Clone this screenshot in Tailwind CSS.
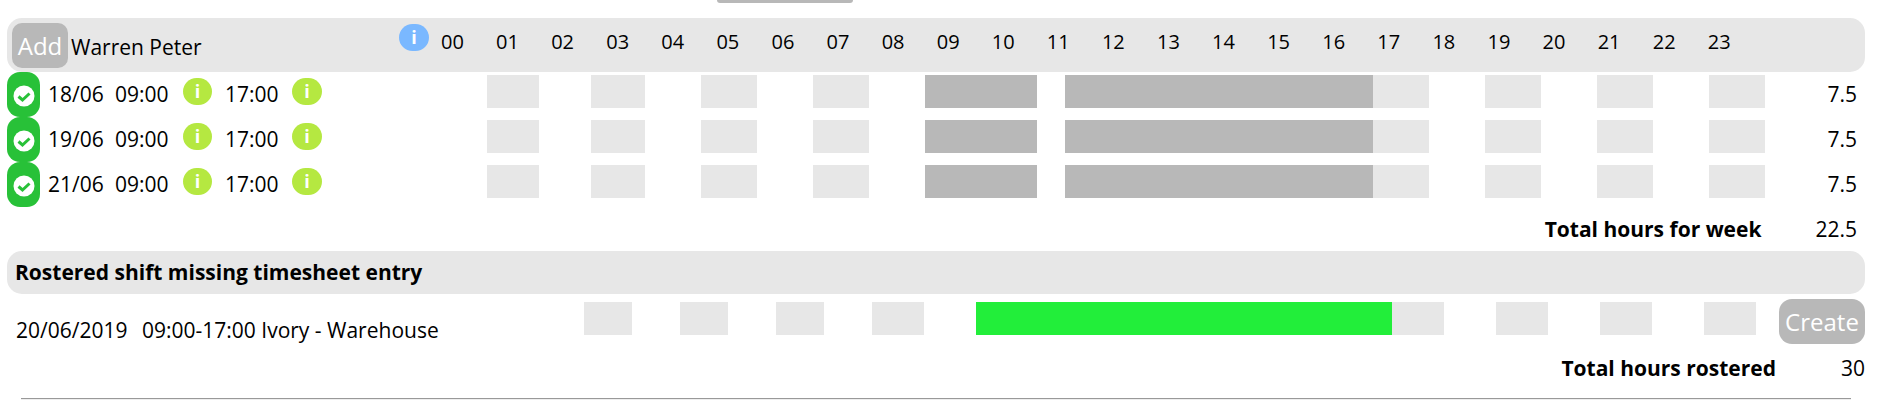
<!DOCTYPE html>
<html lang="en">
<head>
    <meta charset="UTF-8">
    <title>Timesheet</title>
    <script src="https://cdn.jsdelivr.net/npm/@tailwindcss/browser@4"></script>
</head>
<body class="bg-white text-black font-['Open_Sans',sans-serif] text-[21px] overflow-hidden">
<div class="w-[1885px] h-[407px]">
    <!-- button cut off by the top of the page -->
    <div class="ml-[717px] w-[136px] h-[3px] bg-[#b8b8b8] rounded-b-[10px]"></div>

    <!-- Employee header -->
    <div class="mt-[15px] ml-[7px] w-[1858px] h-[54px] bg-[#e7e7e7] rounded-[15px] flex">
        <div class="ml-[5px] mt-[5px] w-[56px] h-[45px] bg-[#b8b8b8] rounded-[10px] text-white text-[24px] leading-[45px] text-center">Add</div>
        <div class="ml-[3px] w-[328px] leading-[58px]">Warren Peter</div>
        <div class="mt-[6px] w-[30px] h-[27px] bg-[#7ab8ff] rounded-[14px] text-white font-bold text-[18px] leading-[26px] text-center">i</div>
        <div class="ml-[12px] flex text-[20px] leading-[48px]">
            <span class="w-[55.09px]">00</span><span class="w-[55.09px]">01</span><span class="w-[55.09px]">02</span><span class="w-[55.09px]">03</span><span class="w-[55.09px]">04</span><span class="w-[55.09px]">05</span><span class="w-[55.09px]">06</span><span class="w-[55.09px]">07</span><span class="w-[55.09px]">08</span><span class="w-[55.09px]">09</span><span class="w-[55.09px]">10</span><span class="w-[55.09px]">11</span><span class="w-[55.09px]">12</span><span class="w-[55.09px]">13</span><span class="w-[55.09px]">14</span><span class="w-[55.09px]">15</span><span class="w-[55.09px]">16</span><span class="w-[55.09px]">17</span><span class="w-[55.09px]">18</span><span class="w-[55.09px]">19</span><span class="w-[55.09px]">20</span><span class="w-[55.09px]">21</span><span class="w-[55.09px]">22</span><span class="w-[55.09px]">23</span>
        </div>
    </div>

    <!-- Timesheet rows -->
    <div class="flex h-[45px] pl-[7px]">
        <div class="w-[33px] h-[45px] bg-[#28c138] rounded-[13px] flex items-center justify-center">
            <svg class="mt-[3px]" width="22" height="22" viewBox="0 0 22 22"><circle cx="11" cy="11" r="10.5" fill="#fff"/><path d="M5.5 11.5l4 3.5 7-6.5" fill="none" stroke="#28c138" stroke-width="3"/></svg>
        </div>
        <div class="ml-[8px] w-[67px] leading-[45px]">18/06</div>
        <div class="w-[68px] leading-[45px]">09:00</div>
        <div class="mt-[6px] w-[29px] h-[27px] bg-[#b5e841] rounded-[14px] text-white font-bold text-[18px] leading-[26px] text-center">i</div>
        <div class="ml-[13px] w-[67px] leading-[45px]">17:00</div>
        <div class="mt-[6px] w-[30px] h-[27px] bg-[#b5e841] rounded-[14px] text-white font-bold text-[18px] leading-[26px] text-center">i</div>
        <div class="ml-[165px] mt-[3px] flex h-[33px]">
            <div class="w-[52px] bg-[#e7e7e7]"></div>
            <div class="ml-[52px] w-[54px] bg-[#e7e7e7]"></div>
            <div class="ml-[56px] w-[56px] bg-[#e7e7e7]"></div>
            <div class="ml-[56px] w-[56px] bg-[#e7e7e7]"></div>
            <div class="ml-[56px] w-[112px] bg-[#b8b8b8]"></div>
            <div class="ml-[28px] w-[308px] bg-[#b8b8b8]"></div>
            <div class="w-[56px] bg-[#e7e7e7]"></div>
            <div class="ml-[56px] w-[56px] bg-[#e7e7e7]"></div>
            <div class="ml-[56px] w-[56px] bg-[#e7e7e7]"></div>
            <div class="ml-[56px] w-[56px] bg-[#e7e7e7]"></div>
        </div>
        <div class="w-[92px] text-right leading-[45px]">7.5</div>
    </div>
    <div class="flex h-[45px] pl-[7px]">
        <div class="w-[33px] h-[45px] bg-[#28c138] rounded-[13px] flex items-center justify-center">
            <svg class="mt-[3px]" width="22" height="22" viewBox="0 0 22 22"><circle cx="11" cy="11" r="10.5" fill="#fff"/><path d="M5.5 11.5l4 3.5 7-6.5" fill="none" stroke="#28c138" stroke-width="3"/></svg>
        </div>
        <div class="ml-[8px] w-[67px] leading-[45px]">19/06</div>
        <div class="w-[68px] leading-[45px]">09:00</div>
        <div class="mt-[6px] w-[29px] h-[27px] bg-[#b5e841] rounded-[14px] text-white font-bold text-[18px] leading-[26px] text-center">i</div>
        <div class="ml-[13px] w-[67px] leading-[45px]">17:00</div>
        <div class="mt-[6px] w-[30px] h-[27px] bg-[#b5e841] rounded-[14px] text-white font-bold text-[18px] leading-[26px] text-center">i</div>
        <div class="ml-[165px] mt-[3px] flex h-[33px]">
            <div class="w-[52px] bg-[#e7e7e7]"></div>
            <div class="ml-[52px] w-[54px] bg-[#e7e7e7]"></div>
            <div class="ml-[56px] w-[56px] bg-[#e7e7e7]"></div>
            <div class="ml-[56px] w-[56px] bg-[#e7e7e7]"></div>
            <div class="ml-[56px] w-[112px] bg-[#b8b8b8]"></div>
            <div class="ml-[28px] w-[308px] bg-[#b8b8b8]"></div>
            <div class="w-[56px] bg-[#e7e7e7]"></div>
            <div class="ml-[56px] w-[56px] bg-[#e7e7e7]"></div>
            <div class="ml-[56px] w-[56px] bg-[#e7e7e7]"></div>
            <div class="ml-[56px] w-[56px] bg-[#e7e7e7]"></div>
        </div>
        <div class="w-[92px] text-right leading-[45px]">7.5</div>
    </div>
    <div class="flex h-[45px] pl-[7px]">
        <div class="w-[33px] h-[45px] bg-[#28c138] rounded-[13px] flex items-center justify-center">
            <svg class="mt-[3px]" width="22" height="22" viewBox="0 0 22 22"><circle cx="11" cy="11" r="10.5" fill="#fff"/><path d="M5.5 11.5l4 3.5 7-6.5" fill="none" stroke="#28c138" stroke-width="3"/></svg>
        </div>
        <div class="ml-[8px] w-[67px] leading-[45px]">21/06</div>
        <div class="w-[68px] leading-[45px]">09:00</div>
        <div class="mt-[6px] w-[29px] h-[27px] bg-[#b5e841] rounded-[14px] text-white font-bold text-[18px] leading-[26px] text-center">i</div>
        <div class="ml-[13px] w-[67px] leading-[45px]">17:00</div>
        <div class="mt-[6px] w-[30px] h-[27px] bg-[#b5e841] rounded-[14px] text-white font-bold text-[18px] leading-[26px] text-center">i</div>
        <div class="ml-[165px] mt-[3px] flex h-[33px]">
            <div class="w-[52px] bg-[#e7e7e7]"></div>
            <div class="ml-[52px] w-[54px] bg-[#e7e7e7]"></div>
            <div class="ml-[56px] w-[56px] bg-[#e7e7e7]"></div>
            <div class="ml-[56px] w-[56px] bg-[#e7e7e7]"></div>
            <div class="ml-[56px] w-[112px] bg-[#b8b8b8]"></div>
            <div class="ml-[28px] w-[308px] bg-[#b8b8b8]"></div>
            <div class="w-[56px] bg-[#e7e7e7]"></div>
            <div class="ml-[56px] w-[56px] bg-[#e7e7e7]"></div>
            <div class="ml-[56px] w-[56px] bg-[#e7e7e7]"></div>
            <div class="ml-[56px] w-[56px] bg-[#e7e7e7]"></div>
        </div>
        <div class="w-[92px] text-right leading-[45px]">7.5</div>
    </div>

    <!-- Week total -->
    <div class="flex justify-end h-[44px] leading-[44px] pr-[28px]">
        <b class="font-bold">Total hours for week</b>
        <span class="ml-[54px]">22.5</span>
    </div>

    <!-- Missing entries -->
    <div class="ml-[7px] w-[1858px] h-[43px] pl-[8px] bg-[#e7e7e7] rounded-[15px] font-bold leading-[43px]">Rostered shift missing timesheet entry</div>
    <div class="flex h-[50px] pl-[16px]">
        <div class="w-[126px] leading-[72px]">20/06/2019</div>
        <div class="w-[442px] leading-[72px]">09:00-17:00 Ivory - Warehouse</div>
        <div class="mt-[8px] flex h-[33px]">
            <div class="w-[48px] bg-[#e7e7e7]"></div>
            <div class="ml-[48px] w-[48px] bg-[#e7e7e7]"></div>
            <div class="ml-[48px] w-[48px] bg-[#e7e7e7]"></div>
            <div class="ml-[48px] w-[52px] bg-[#e7e7e7]"></div>
            <div class="ml-[52px] w-[416px] bg-[#22ee3a]"></div>
            <div class="w-[52px] bg-[#e7e7e7]"></div>
            <div class="ml-[52px] w-[52px] bg-[#e7e7e7]"></div>
            <div class="ml-[52px] w-[52px] bg-[#e7e7e7]"></div>
            <div class="ml-[52px] w-[52px] bg-[#e7e7e7]"></div>
        </div>
        <div class="ml-[23px] mt-[5px] w-[86px] h-[45px] bg-[#b8b8b8] rounded-[13px] text-white text-[24px] leading-[45px] text-center">Create</div>
    </div>

    <!-- Rostered total -->
    <div class="flex justify-end h-[48px] leading-[48px] pr-[20px]">
        <b class="font-bold">Total hours rostered</b>
        <span class="ml-[65px]">30</span>
    </div>
    <hr class="ml-[21px] mt-[6px] w-[1830px] border-t border-b border-t-[#999999] border-b-[#eeeeee]">
</div>
</body>
</html>
